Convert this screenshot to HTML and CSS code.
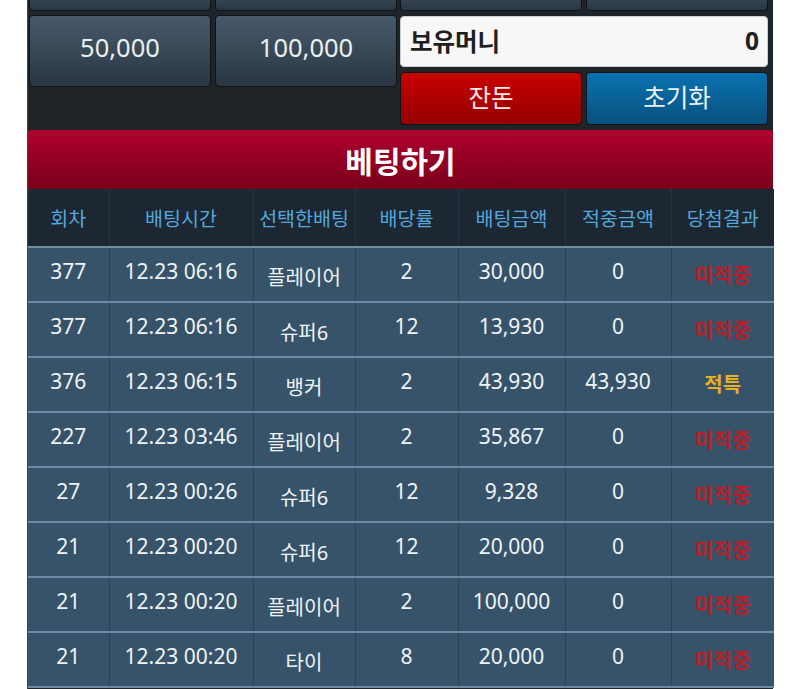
FILE: index.html
```html
<!DOCTYPE html>
<html lang="ko">
<head>
<meta charset="utf-8">
<link rel="stylesheet" href="styles.css">
</head>
<body>
<div class="wrap">
  <div class="top">
    <div class="left">
      <div class="btn btn-cut"></div>
      <div class="btn btn-cut"></div>
      <div class="btn">50,000</div>
      <div class="btn">100,000</div>
    </div>
    <div class="right">
      <div class="btn btn-cut"></div>
      <div class="btn btn-cut"></div>
      <div class="money"><span>보유머니</span><span>0</span></div>
      <div class="act red">잔돈</div>
      <div class="act blue">초기화</div>
    </div>
  </div>
  <div class="title">베팅하기</div>
  <table class="tbl">
    <colgroup>
      <col style="width:81px"><col style="width:144px"><col style="width:102px"><col style="width:103px"><col style="width:107px"><col style="width:106px"><col style="width:103px">
    </colgroup>
    <thead>
      <tr><th>회차</th><th>배팅시간</th><th>선택한배팅</th><th>배당률</th><th>배팅금액</th><th>적중금액</th><th>당첨결과</th></tr>
    </thead>
    <tbody>
      <tr><td>377</td><td>12.23 06:16</td><td class="k">플레이어</td><td>2</td><td>30,000</td><td>0</td><td class="lose">미적중</td></tr>
      <tr><td>377</td><td>12.23 06:16</td><td class="k">슈퍼6</td><td>12</td><td>13,930</td><td>0</td><td class="lose">미적중</td></tr>
      <tr><td>376</td><td>12.23 06:15</td><td class="k">뱅커</td><td>2</td><td>43,930</td><td>43,930</td><td class="tie">적특</td></tr>
      <tr><td>227</td><td>12.23 03:46</td><td class="k">플레이어</td><td>2</td><td>35,867</td><td>0</td><td class="lose">미적중</td></tr>
      <tr><td>27</td><td>12.23 00:26</td><td class="k">슈퍼6</td><td>12</td><td>9,328</td><td>0</td><td class="lose">미적중</td></tr>
      <tr><td>21</td><td>12.23 00:20</td><td class="k">슈퍼6</td><td>12</td><td>20,000</td><td>0</td><td class="lose">미적중</td></tr>
      <tr><td>21</td><td>12.23 00:20</td><td class="k">플레이어</td><td>2</td><td>100,000</td><td>0</td><td class="lose">미적중</td></tr>
      <tr><td>21</td><td>12.23 00:20</td><td class="k">타이</td><td>8</td><td>20,000</td><td>0</td><td class="lose">미적중</td></tr>
    </tbody>
  </table>
</div>
</body>
</html>
```

FILE: styles.css
```css
* { box-sizing: border-box; }
html, body { margin: 0; padding: 0; background: #ffffff; }
body {
  font-family: "Noto Sans", "Noto Sans CJK KR", sans-serif;
  height: 689px;
  overflow: hidden;
}
.wrap {
  margin-left: 27px;
  width: 746px;
  background: #1e2428;
  border-left: 1px solid #3a4650;
  padding-bottom: 2px;
}
.top {
  display: flex;
  gap: 3px;
  padding: 0 5px 5px 0;
}
.left, .right {
  display: grid;
  grid-template-columns: 182px 182px;
  column-gap: 4px;
  align-content: start;
}
.left { row-gap: 4px; padding-left: 1px; }
.right { row-gap: 5px; column-gap: 4px; }
.btn {
  height: 72px;
  border: 1px solid #0e1418;
  border-radius: 4px;
  background: linear-gradient(#46596a, #2a3741);
  color: #e9eef1;
  font-size: 25.5px;
  display: flex;
  align-items: center;
  justify-content: center;
  padding-bottom: 9px;
}
.btn-cut {
  height: 11px;
  padding: 0;
  border-top: none;
  border-radius: 0 0 4px 4px;
  background: linear-gradient(#334350, #2a3741);
}
.money {
  grid-column: 1 / 3;
  height: 51px;
  background: #f7f7f7;
  border: 1px solid #c9cfd4;
  border-radius: 4px;
  display: flex;
  justify-content: space-between;
  align-items: center;
  padding: 0 8px 2px 9px;
  font-weight: bold;
  font-size: 24.5px;
  color: #1f1f1f;
}
.act {
  height: 53px;
  border: 1px solid #0e1418;
  border-radius: 4px;
  color: #f2f2f2;
  font-size: 24.5px;
  display: flex;
  align-items: center;
  justify-content: center;
  padding-bottom: 4px;
}
.red { background: linear-gradient(#c80000, #960000); color: #fde8e8; }
.blue { background: linear-gradient(#0a72b0, #08507e); color: #eaf3fa; }
.title {
  height: 59px;
  background: linear-gradient(#b0002e, #78001a);
  color: #ffffff;
  font-weight: bold;
  font-size: 30px;
  display: flex;
  align-items: center;
  justify-content: center;
  border-radius: 3px 3px 0 0;
}
.tbl {
  width: 745px;
  border-collapse: collapse;
  table-layout: fixed;
}
.tbl th {
  height: 58px;
  background: #1c2731;
  color: #55a8de;
  font-weight: normal;
  font-size: 19.5px;
  border-left: 1px solid #27343f;
  border-bottom: 2px solid #6d8ea3;
  padding: 0;
}
.tbl td {
  height: 55px;
  background: #36536a;
  color: #f0f3f5;
  font-size: 21px;
  text-align: center;
  border-left: 1px solid #2a4254;
  border-bottom: 2px solid #6b8ca2;
  padding: 0 0 7px 0;
}
.tbl th:first-child, .tbl td:first-child { border-left: none; }
.tbl td.k { padding-top: 4px; padding-bottom: 0; font-size: 20px; }
.tbl td.lose { color: #bb1e28; font-weight: bold; font-size: 20.5px; padding-top: 0; padding-bottom: 2px; }
.tbl td.tie { color: #e8b020; font-weight: bold; font-size: 20px; padding-top: 0; padding-bottom: 2px; }
```
